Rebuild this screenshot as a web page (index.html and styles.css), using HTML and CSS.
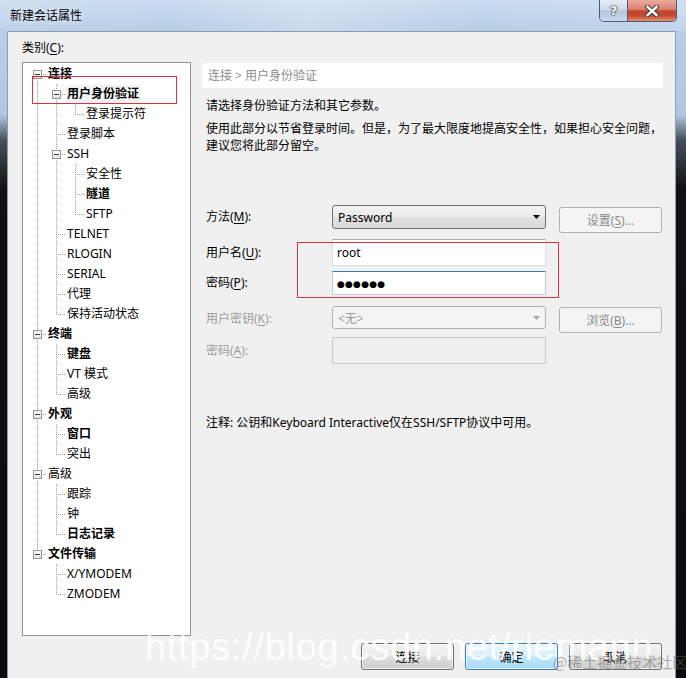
FILE: index.html
```html
<!DOCTYPE html>
<html lang="zh-CN">

<head>
  <meta charset="UTF-8">
  <meta name="viewport" content="width=device-width, initial-scale=1.0">
  <title>新建会话属性</title>
  <link rel="stylesheet" href="styles.css">
</head>

<body>
  <div class="window">
    <div class="titlebar">
      <span class="title">新建会话属性</span>
      <div class="caption-buttons">
        <span class="cap-help">?</span>
        <span class="cap-close">
          <svg width="14" height="12" viewBox="0 0 14 12">
            <path d="M2.5 2 L11.5 10 M11.5 2 L2.5 10" stroke="#3b3b3b" stroke-width="4.4" stroke-linecap="square" fill="none" />
            <path d="M2.5 2 L11.5 10 M11.5 2 L2.5 10" stroke="#ffffff" stroke-width="2.4" stroke-linecap="square" fill="none" />
          </svg>
        </span>
      </div>
    </div>

    <div class="client">
      <div class="category-label">类别(<u>C</u>):</div>

      <div class="main">
        <div class="tree">
          <div class="node"><span class="g d"><b class="box"></b></span><span class="label bold">连接</span></div>
          <div class="node"><span class="g v"></span><span class="g t"><b class="box"></b></span><span class="label bold sel">用户身份验证</span></div>
          <div class="node"><span class="g v"></span><span class="g v"></span><span class="g l"></span><span class="label">登录提示符</span></div>
          <div class="node"><span class="g v"></span><span class="g t"></span><span class="label">登录脚本</span></div>
          <div class="node"><span class="g v"></span><span class="g t"><b class="box"></b></span><span class="label">SSH</span></div>
          <div class="node"><span class="g v"></span><span class="g v"></span><span class="g t"></span><span class="label">安全性</span></div>
          <div class="node"><span class="g v"></span><span class="g v"></span><span class="g t"></span><span class="label bold">隧道</span></div>
          <div class="node"><span class="g v"></span><span class="g v"></span><span class="g l"></span><span class="label">SFTP</span></div>
          <div class="node"><span class="g v"></span><span class="g t"></span><span class="label">TELNET</span></div>
          <div class="node"><span class="g v"></span><span class="g t"></span><span class="label">RLOGIN</span></div>
          <div class="node"><span class="g v"></span><span class="g t"></span><span class="label">SERIAL</span></div>
          <div class="node"><span class="g v"></span><span class="g t"></span><span class="label">代理</span></div>
          <div class="node"><span class="g v"></span><span class="g l"></span><span class="label">保持活动状态</span></div>
          <div class="node"><span class="g t"><b class="box"></b></span><span class="label bold">终端</span></div>
          <div class="node"><span class="g v"></span><span class="g t"></span><span class="label bold">键盘</span></div>
          <div class="node"><span class="g v"></span><span class="g t"></span><span class="label">VT 模式</span></div>
          <div class="node"><span class="g v"></span><span class="g l"></span><span class="label">高级</span></div>
          <div class="node"><span class="g t"><b class="box"></b></span><span class="label bold">外观</span></div>
          <div class="node"><span class="g v"></span><span class="g t"></span><span class="label bold">窗口</span></div>
          <div class="node"><span class="g v"></span><span class="g l"></span><span class="label">突出</span></div>
          <div class="node"><span class="g t"><b class="box"></b></span><span class="label">高级</span></div>
          <div class="node"><span class="g v"></span><span class="g t"></span><span class="label">跟踪</span></div>
          <div class="node"><span class="g v"></span><span class="g t"></span><span class="label">钟</span></div>
          <div class="node"><span class="g v"></span><span class="g l"></span><span class="label bold">日志记录</span></div>
          <div class="node"><span class="g l"><b class="box"></b></span><span class="label bold">文件传输</span></div>
          <div class="node"><span class="g"></span><span class="g t"></span><span class="label">X/YMODEM</span></div>
          <div class="node"><span class="g"></span><span class="g l"></span><span class="label">ZMODEM</span></div>
        </div>

        <div class="panel">
          <div class="crumb">连接 &gt; 用户身份验证</div>
          <p class="desc">请选择身份验证方法和其它参数。</p>
          <p class="desc desc-long">使用此部分以节省登录时间。但是，为了最大限度地提高安全性，如果担心安全问题，<br>建议您将此部分留空。</p>

          <div class="form">
            <div class="field-row r-method">
              <span class="field-label">方法(<u>M</u>):</span>
              <div class="combo">
                <span>Password</span>
                <svg width="7" height="4" viewBox="0 0 7 4"><path d="M0 0 H7 L3.5 4 Z" fill="#000" /></svg>
              </div>
              <span class="side-btn disabled">设置(<u>S</u>)...</span>
            </div>
            <div class="field-row r-user">
              <span class="field-label">用户名(<u>U</u>):</span>
              <div class="textbox">root</div>
            </div>
            <div class="field-row r-pass">
              <span class="field-label">密码(<u>P</u>):</span>
              <div class="textbox focused"><span class="dots">●●●●●●</span></div>
            </div>
            <div class="field-row r-key">
              <span class="field-label disabled-text">用户密钥(<u>K</u>):</span>
              <div class="combo disabled">
                <span>&lt;无&gt;</span>
                <svg width="7" height="4" viewBox="0 0 7 4"><path d="M0 0 H7 L3.5 4 Z" fill="#a8a8a8" /></svg>
              </div>
              <span class="side-btn disabled">浏览(<u>B</u>)...</span>
            </div>
            <div class="field-row r-phrase">
              <span class="field-label disabled-text">密码(<u>A</u>):</span>
              <div class="textbox disabled"></div>
            </div>
          </div>

          <p class="note">注释: 公钥和Keyboard Interactive仅在SSH/SFTP协议中可用。</p>
        </div>
      </div>

      <div class="dialog-buttons">
        <span class="push">连接</span>
        <span class="push default">确定</span>
        <span class="push">取消</span>
      </div>
    </div>

    <!-- 注释用的红框 -->
    <div class="annot annot-tree"></div>
    <div class="annot annot-login"></div>

    <div class="watermark">https://blog.csdn.net/riemann</div>
    <div class="source-tag">@稀土掘金技术社区</div>
  </div>
</body>

</html>
```

FILE: styles.css
```css
html,
body {
  margin: 0;
  padding: 0;
}

body {
  width: 686px;
  height: 678px;
  overflow: hidden;
  font-family: "Noto Sans", "Noto Sans CJK SC", sans-serif;
  font-size: 12px;
  color: #000;
}

u {
  text-decoration-thickness: 1px;
  text-underline-offset: 2px;
}

.window {
  position: relative;
  height: 678px;
  display: flex;
  flex-direction: column;
  background: linear-gradient(to bottom, #c8dbef 0, #b8cee6 31px, #b1c7df 115px, #46505c 140px, #111 190px, #0b0b0b 100%);
}

/* タイトルバー */
.titlebar {
  height: 31px;
  flex: none;
  display: flex;
  align-items: flex-start;
  background:
    linear-gradient(to right, rgba(255, 255, 255, 0.1), rgba(255, 255, 255, 0) 25%, rgba(255, 255, 255, 0.25) 45%, rgba(255, 255, 255, 0) 70%, rgba(255, 255, 255, 0.15)),
    linear-gradient(to bottom, #c9dcf0, #b6cde6);
}

.title {
  margin-left: 10px;
  line-height: 31px;
  text-shadow: 0 0 6px rgba(255, 255, 255, 0.9);
}

.caption-buttons {
  margin-left: auto;
  margin-right: 9px;
  display: flex;
  height: 21px;
  border: 1px solid #4a5d78;
  border-top: none;
  border-radius: 0 0 5px 5px;
  overflow: hidden;
}

.cap-help {
  width: 27px;
  display: flex;
  justify-content: center;
  align-items: center;
  font-family: "DejaVu Sans", sans-serif;
  font-weight: bold;
  font-size: 13px;
  color: #fff;
  text-shadow: 0 0 1px #333, 0 0 1px #333, 0 0 2px #333;
  background: linear-gradient(to bottom, #e2ecf6 0%, #cbdae9 48%, #b3c6db 52%, #c9d9e8 100%);
  border-right: 1px solid #4a5d78;
}

.cap-close {
  width: 48px;
  display: flex;
  justify-content: center;
  align-items: center;
  background: linear-gradient(to bottom, #eaab9d 0%, #d8816f 45%, #c2432e 52%, #c64a31 75%, #e39272 100%);
}

/* クライアント領域 */
.client {
  flex: 1;
  margin: 0 10px 0 7px;
  padding: 7px 12px 0 14px;
  border: 1px solid #8b9cb2;
  border-bottom: none;
  background-color: #f0f0f0;
  display: flex;
  flex-direction: column;
}

.category-label {
  line-height: 18px;
  margin-bottom: 5px;
}

.main {
  display: flex;
  gap: 11px;
  height: 574px;
}

/* ツリー */
.tree {
  width: 169px;
  height: 574px;
  box-sizing: border-box;
  border: 1px solid #8f9194;
  background-color: #fff;
  padding: 1px 0 0 5px;
}

.node {
  display: flex;
  align-items: center;
  height: 20px;
  white-space: nowrap;
}

.g {
  width: 19px;
  height: 20px;
  flex: none;
  display: flex;
  align-items: flex-start;
  --vd: repeating-linear-gradient(to bottom, #a0a0a0 0 1px, transparent 1px 2px);
  --hd: repeating-linear-gradient(to right, #a0a0a0 0 1px, transparent 1px 2px);
}

.g.v {
  background: var(--vd) 9px 0 / 1px 20px no-repeat;
}

.g.t {
  background: var(--hd) 9px 10px / 10px 1px no-repeat, var(--vd) 9px 0 / 1px 20px no-repeat;
}

.g.l {
  background: var(--hd) 9px 10px / 10px 1px no-repeat, var(--vd) 9px 0 / 1px 11px no-repeat;
}

.g.d {
  background: var(--hd) 9px 10px / 10px 1px no-repeat, var(--vd) 9px 10px / 1px 10px no-repeat;
}

.box {
  width: 9px;
  height: 9px;
  box-sizing: border-box;
  margin: 6px 0 0 5px;
  border: 1px solid #959595;
  background:
    linear-gradient(#3a3a3a, #3a3a3a) center / 5px 1px no-repeat,
    linear-gradient(to bottom, #ffffff, #e4e4e4);
}

.label {
  padding: 0 2px 0 1px;
  line-height: 18px;
}

.label.bold {
  font-weight: bold;
}

.label.sel {
  background-color: #f2f2f2;
}

/* 右パネル */
.panel {
  width: 461px;
  display: flex;
  flex-direction: column;
}

.crumb {
  margin-top: 1px;
  height: 25px;
  line-height: 25px;
  padding-left: 6px;
  background-color: #fff;
  color: #8c8c8c;
}

.desc {
  margin: 9px 0 0;
  padding-left: 4px;
  line-height: 17px;
  white-space: nowrap;
}

.desc-long {
  margin-top: 6px;
}

.form {
  margin-top: 51px;
  padding-left: 4px;
}

.field-row {
  display: flex;
  align-items: flex-start;
}

.field-label {
  width: 126px;
  flex: none;
}

.disabled-text {
  color: #9c9c9c;
}

.combo,
.textbox {
  width: 214px;
  box-sizing: border-box;
  flex: none;
}

.combo {
  display: flex;
  align-items: center;
  justify-content: space-between;
  padding: 0 5px;
  border: 1px solid #707070;
  border-radius: 3px;
  background: linear-gradient(to bottom, #f2f2f2 0%, #ebebeb 48%, #e2e2e2 52%, #d9d9d9 100%);
}

.combo.disabled {
  border-color: #adb2b5;
  background: #f4f4f4;
  color: #9c9c9c;
}

.textbox {
  padding-left: 4px;
  border: 1px solid #dbdfe6;
  border-top-color: #abadb3;
  background-color: #fff;
}

.textbox.focused {
  border-color: #b5cfe7;
  border-top-color: #3d7bad;
}

.textbox.disabled {
  border-color: #c9c9c9;
  background-color: #f0f0f0;
}

.dots {
  font-family: "DejaVu Sans", sans-serif;
  font-size: 9px;
  letter-spacing: 0.2px;
}

.side-btn {
  width: 103px;
  height: 26px;
  box-sizing: border-box;
  margin-left: 13px;
  display: flex;
  justify-content: center;
  align-items: center;
  border: 1px solid #adb2b5;
  border-radius: 3px;
  background-color: #f4f4f4;
  color: #8a8a8a;
}

.r-method .field-label {
  line-height: 24px;
}

.r-method .combo {
  height: 24px;
}

.r-method .side-btn {
  margin-top: 2px;
}

.r-user {
  margin-top: 6px;
}

.r-user .textbox {
  height: 27px;
  line-height: 25px;
}

.r-user .field-label {
  line-height: 27px;
}

.r-pass {
  margin-top: 5px;
}

.r-pass .field-label {
  line-height: 24px;
}

.r-pass .textbox {
  height: 24px;
  line-height: 22px;
}

.r-key {
  margin-top: 11px;
}

.r-key .field-label {
  line-height: 25px;
}

.r-key .combo {
  height: 23px;
}

.r-key .side-btn {
  margin-top: 1px;
}

.r-phrase {
  margin-top: 4px;
}

.r-phrase .field-label {
  line-height: 27px;
}

.r-phrase .textbox {
  height: 27px;
}

.note {
  margin: 50px 0 0;
  padding-left: 4px;
  line-height: 17px;
  white-space: nowrap;
}

/* 下部ボタン */
.dialog-buttons {
  display: flex;
  justify-content: flex-end;
  gap: 11px;
  margin-top: 7px;
  padding-right: 1px;
}

.push {
  width: 93px;
  height: 27px;
  box-sizing: border-box;
  display: flex;
  justify-content: center;
  align-items: center;
  border: 1px solid #707070;
  border-radius: 3px;
  box-shadow: inset 0 0 0 1px rgba(255, 255, 255, 0.7);
  background: linear-gradient(to bottom, #f2f2f2 0%, #ebebeb 48%, #dddddd 52%, #cfcfcf 100%);
}

.push.default {
  border-color: #3c7fb1;
  background: linear-gradient(to bottom, #eaf6fd 0%, #d9f0fc 48%, #bee6fd 52%, #a7d9f5 100%);
}

/* 注釈・透かし */
.annot {
  position: absolute;
  box-sizing: border-box;
  border: 1px solid #d8333e;
}

.annot-tree {
  left: 32px;
  top: 76px;
  width: 145px;
  height: 28px;
}

.annot-login {
  left: 297px;
  top: 242px;
  width: 262px;
  height: 56px;
}

.watermark {
  position: absolute;
  left: 145px;
  top: 628px;
  font-family: "Liberation Sans", sans-serif;
  font-size: 38px;
  line-height: 38px;
  letter-spacing: 0.7px;
  color: rgba(255, 255, 255, 0.88);
  white-space: nowrap;
}

.source-tag {
  position: absolute;
  left: 553px;
  top: 653px;
  font-family: "Noto Sans CJK SC", sans-serif;
  font-size: 15px;
  line-height: 18px;
  color: rgba(100, 100, 100, 0.5);
  white-space: nowrap;
}
```
